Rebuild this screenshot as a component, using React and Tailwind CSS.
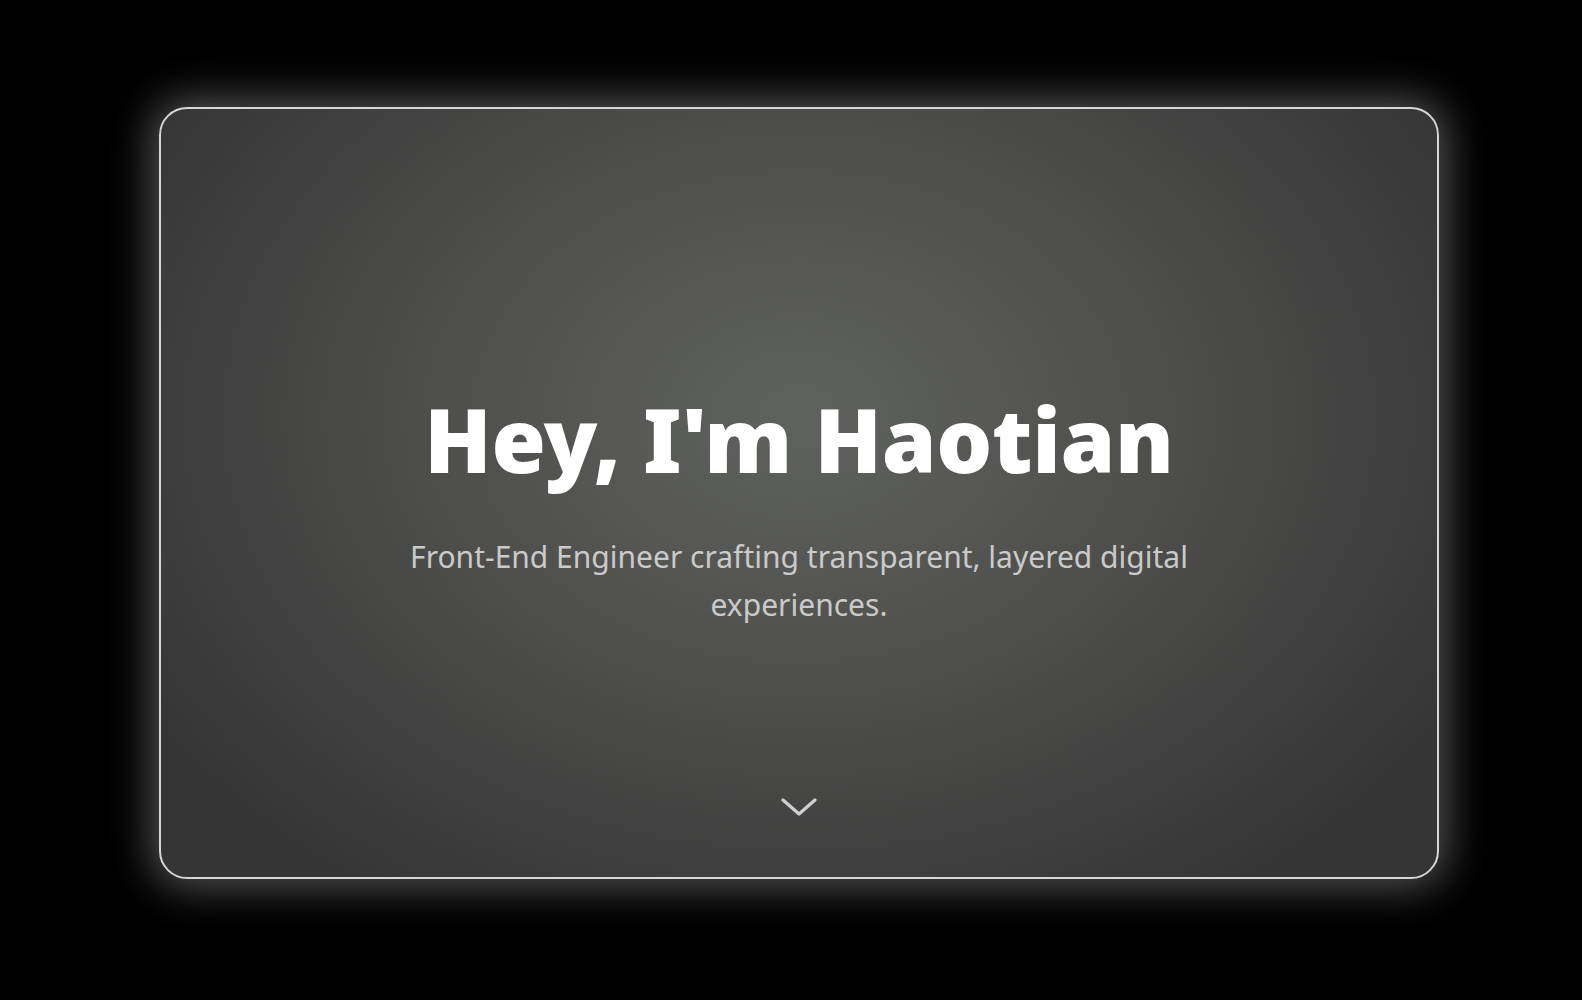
import React from 'react';

// Hero card with a soft glow on a black page
export default function App() {
  return (
    <div className="min-h-screen w-full bg-black pt-[107px] pl-[159px]">
      <section
        className="relative flex h-[772px] w-[1280px] flex-col items-center rounded-[28px] border-2 border-[#d6d6d6] bg-[radial-gradient(ellipse_60%_75%_at_50%_40%,#60625f_0%,#4d4e4c_50%,#343534_100%)] shadow-[0_0_40px_8px_rgba(255,255,255,0.32)]"
        style={{ fontFamily: '"Noto Sans", "Open Sans", sans-serif' }}
      >
        <div className="flex flex-1 flex-col items-center pt-[286px]">
          <h1 className="text-[88px] font-black leading-none tracking-[-0.3px] text-white">
            Hey, I'm Haotian
          </h1>
          <p className="mt-[50px] max-w-[820px] text-center text-[30px] leading-[48px] text-[#c9cac9]">
            Front-End Engineer crafting transparent, layered digital experiences.
          </p>
        </div>
        {/* scroll hint */}
        <div className="pb-[60px]">
          <svg width="36" height="20" viewBox="0 0 36 20" fill="none">
            <polyline points="2,3 18,17 34,3" stroke="#cfd0cf" strokeWidth="3.2" strokeLinecap="round" strokeLinejoin="round" />
          </svg>
        </div>
      </section>
    </div>
  );
}
